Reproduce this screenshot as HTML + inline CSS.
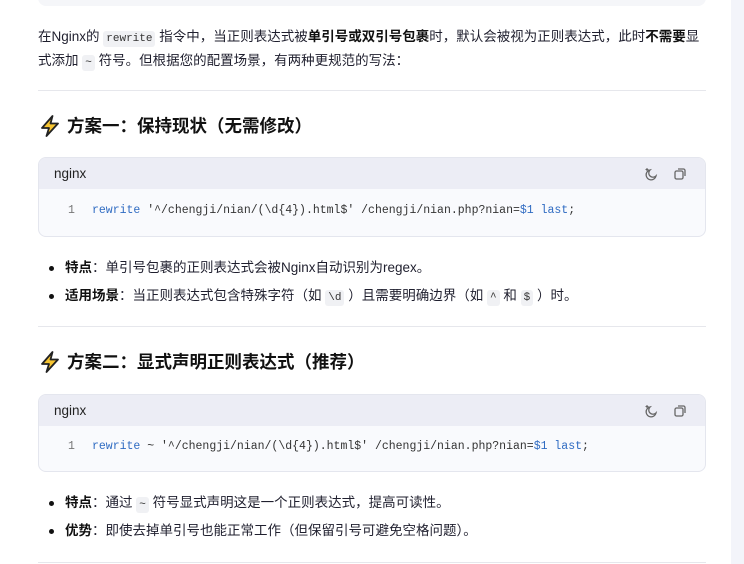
<!DOCTYPE html>
<html><head><meta charset="utf-8"><style>
*{margin:0;padding:0;box-sizing:border-box}
html,body{width:744px;height:564px;overflow:hidden;background:#fff}
body{position:relative;font-family:"Liberation Sans","Noto Sans CJK SC",sans-serif;color:#1f1f2e;font-size:14px}
.scroll{position:absolute;left:731px;top:0;width:13px;height:564px;background:#f3f4fa}
.topbox{position:absolute;left:38px;top:-20px;width:668px;height:26px;background:#f5f6f9;border-radius:8px}
p.t{position:absolute;left:38px;line-height:24px;white-space:nowrap;font-size:13.5px}
b{font-weight:700;color:#111}
code{font-family:"Liberation Mono",monospace;font-size:11px;background:#f0f1f4;border-radius:3px;padding:2px 3px;color:#333}
.hr{position:absolute;left:38px;width:668px;height:1px;background:#e6e7ec}
h3{position:absolute;left:38px;font-size:17.5px;font-weight:700;color:#111;display:flex;align-items:center;gap:5px;white-space:nowrap}
.cb{position:absolute;left:38px;width:668px;height:80px;border:1px solid #e4e6ee;border-radius:8px;background:#f9fafd;overflow:hidden}
.cb .hd{height:31px;background:#ecedf5;padding-left:15px;line-height:31px;font-size:13.5px;color:#222}
.cb .ln{position:absolute;left:29px;top:46px;font-family:"Liberation Mono",monospace;font-size:11.5px;color:#777}
.cb .cd{position:absolute;left:53px;top:46px;font-family:"Liberation Mono",monospace;font-size:11.5px;color:#333;white-space:nowrap}
.kw{color:#2f6bc2}
.ic{position:absolute;top:8px}
li{position:absolute;left:65px;list-style:none;white-space:nowrap;line-height:20px;font-size:13.5px}
li:before{content:"";position:absolute;left:-16px;top:8px;width:5px;height:5px;border-radius:50%;background:#111}
</style></head><body>
<div class="topbox"></div>
<div class="scroll"></div>

<p class="t" style="top:25px">在Nginx的 <code>rewrite</code> 指令中，当正则表达式被<b>单引号或双引号包裹</b>时，默认会被视为正则表达式，此时<b>不需要</b>显</p>
<p class="t" style="top:49px">式添加 <code>~</code> 符号。但根据您的配置场景，有两种更规范的写法：</p>
<div class="hr" style="top:90px"></div>

<h3 style="top:113px"><svg width="24" height="24" viewBox="0 0 24 24"><path d="M14.5 2L4 14h7l-2.5 8L20 9.5h-7.5l2-7.5z" fill="#f7c531" stroke="#222" stroke-width="1.8" stroke-linejoin="round"/></svg>方案一：保持现状（无需修改）</h3>

<div class="cb" style="top:157px">
<div class="hd">nginx</div>
<svg class="ic" style="left:604px" width="16" height="16" viewBox="0 0 16 16"><path d="M7 4a5 5 0 1 0 6 6 4 4 0 0 1-6-6z" fill="none" stroke="#666" stroke-width="1.3"/><path d="M4 2v3M2.5 3.5h3" stroke="#666" stroke-width="1.1"/></svg>
<svg class="ic" style="left:633px" width="16" height="16" viewBox="0 0 16 16"><rect x="3" y="5" width="8" height="8" rx="1.5" fill="none" stroke="#666" stroke-width="1.3"/><path d="M6 3h5.5a1.5 1.5 0 0 1 1.5 1.5V10" fill="none" stroke="#666" stroke-width="1.3"/></svg>
<span class="ln">1</span>
<span class="cd"><span class="kw">rewrite</span> '^/chengji/nian/(\d{4}).html$' /chengji/nian.php?nian=<span class="kw">$1</span> <span class="kw">last</span>;</span>
</div>

<li style="top:258px"><b>特点</b>：单引号包裹的正则表达式会被Nginx自动识别为regex。</li>
<li style="top:286px"><b>适用场景</b>：当正则表达式包含特殊字符（如 <code>\d</code> ）且需要明确边界（如 <code>^</code> 和 <code>$</code> ）时。</li>
<div class="hr" style="top:326px"></div>

<h3 style="top:349px"><svg width="24" height="24" viewBox="0 0 24 24"><path d="M14.5 2L4 14h7l-2.5 8L20 9.5h-7.5l2-7.5z" fill="#f7c531" stroke="#222" stroke-width="1.8" stroke-linejoin="round"/></svg>方案二：显式声明正则表达式（推荐）</h3>

<div class="cb" style="top:394px;height:78px">
<div class="hd">nginx</div>
<svg class="ic" style="left:604px" width="16" height="16" viewBox="0 0 16 16"><path d="M7 4a5 5 0 1 0 6 6 4 4 0 0 1-6-6z" fill="none" stroke="#666" stroke-width="1.3"/><path d="M4 2v3M2.5 3.5h3" stroke="#666" stroke-width="1.1"/></svg>
<svg class="ic" style="left:633px" width="16" height="16" viewBox="0 0 16 16"><rect x="3" y="5" width="8" height="8" rx="1.5" fill="none" stroke="#666" stroke-width="1.3"/><path d="M6 3h5.5a1.5 1.5 0 0 1 1.5 1.5V10" fill="none" stroke="#666" stroke-width="1.3"/></svg>
<span class="ln" style="top:45px">1</span>
<span class="cd" style="top:45px"><span class="kw">rewrite</span> ~ '^/chengji/nian/(\d{4}).html$' /chengji/nian.php?nian=<span class="kw">$1</span> <span class="kw">last</span>;</span>
</div>

<li style="top:493px"><b>特点</b>：通过 <code>~</code> 符号显式声明这是一个正则表达式，提高可读性。</li>
<li style="top:521px"><b>优势</b>：即使去掉单引号也能正常工作（但保留引号可避免空格问题）。</li>
<div class="hr" style="top:562px"></div>
</body></html>
